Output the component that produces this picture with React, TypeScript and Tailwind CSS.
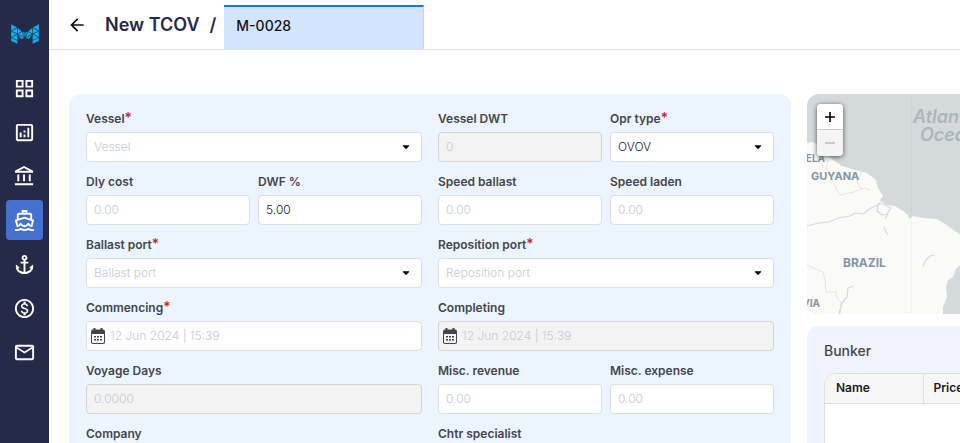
import React, { useId } from 'react';
import {
    MdAnchor,
    MdArrowBack,
    MdMailOutline,
    MdOutlineAccountBalance,
    MdOutlineAnalytics,
    MdOutlineDirectionsBoat,
    MdOutlineGridView,
    MdOutlineMonetizationOn,
} from 'react-icons/md';

const NAV_ITEMS = [
    { label: 'Dashboard', Icon: MdOutlineGridView },
    { label: 'Analytics', Icon: MdOutlineAnalytics },
    { label: 'Accounts', Icon: MdOutlineAccountBalance },
    { label: 'Voyages', Icon: MdOutlineDirectionsBoat, active: true },
    { label: 'Ports', Icon: MdAnchor },
    { label: 'Finance', Icon: MdOutlineMonetizationOn },
    { label: 'Messages', Icon: MdMailOutline },
];

const Logo = () => (
    <svg viewBox="0 0 28 20" className="h-5 w-7" fill="#12b0ec" stroke="#252a4b" strokeWidth="0.4" strokeLinejoin="round">
        {/* left leg */}
        <path d="M0 0L6.500 3.500 0 7zM6.500 3.500V10L0 7zM0 7L6.500 10 0 13.500zM6.500 10v6.500L0 13.500zM0 13.500L6.500 16.500V20L0 17z" />
        {/* right leg */}
        <path d="M28 0L21.500 3.500 28 7zM21.500 3.500V10L28 7zM28 7L21.500 10 28 13.500zM21.500 10v6.500L28 13.500zM28 13.500L21.500 16.500V20L28 17z" />
        {/* middle */}
        <path d="M6.500 3.500L11 7.500 6.500 10zM11 7.500L14 14 6.500 10zM11 7.500L14 8.500V14zM21.500 3.500L17 7.500l4.500 2.500zM17 7.500L14 14l7.500-4zM17 7.500L14 8.500V14zM6.500 10L14 14l-4 1zM21.500 10L14 14l4 1z" />
    </svg>
);

const CalendarIcon = () => (
    <svg viewBox="0 0 14 16" className="h-4 w-3.5">
        <path fill="#45434d" fillRule="evenodd" d="M2.500 0h2v1.500h5V0h2v1.500H12a2 2 0 0 1 2 2V14a2 2 0 0 1-2 2H2a2 2 0 0 1-2-2V3.500a2 2 0 0 1 2-2h.5zM1 6v8a1 1 0 0 0 1 1h10a1 1 0 0 0 1-1V6z" />
        <path fill="#45434d" d="M3 8h2v1.500H3zM6 8h2v1.500H6zM9 8h2v1.500H9zM3 11h2v1.500H3zM6 11h2v1.500H6zM9 11h2v1.500H9z" />
    </svg>
);

type FieldProps = {
    label: string;
    required?: boolean;
    placeholder?: string;
    value?: string;
    disabled?: boolean;
    kind?: 'text' | 'select' | 'date';
}

const Field: React.FC<FieldProps> = ({ label, required, placeholder, value, disabled, kind = 'text' }) => {
    const id = useId();
    const box = 'h-[30px] w-full rounded border pb-px text-xs font-light outline-none placeholder:text-[#c9c9d0]';
    const tone = disabled ? 'border-[#d3d3d3] bg-[#f3f3f3] text-[#c9c9d0]' : 'border-[#dedede] bg-white text-[#222]';

    return (
        <div className="min-w-0">
            <label htmlFor={id} className="mb-[5px] block text-xs leading-4 font-semibold text-[#45464a]">
                {label}
                {required && <span className="text-sm leading-none font-medium text-[#c0271c]">*</span>}
            </label>
            <div className="relative">
                {kind === 'select' ? (
                    <select id={id} defaultValue={value ?? ''} className={`${box} ${tone} appearance-none pr-8 pl-[7px] ${value ? '' : 'text-[#c9c9d0]!'}`}>
                        <option value={value ?? ''}>{value ?? placeholder}</option>
                    </select>
                ) : (
                    <input
                        id={id}
                        type="text"
                        placeholder={placeholder}
                        defaultValue={value}
                        disabled={disabled}
                        className={`${box} ${tone} pr-2 ${kind === 'date' ? 'pl-[23px]' : 'pl-[7px]'}`}
                    />
                )}
                {kind === 'select' && (
                    <svg viewBox="0 0 8 5" className="pointer-events-none absolute top-[13px] right-3 h-[5px] w-2">
                        <path d="M1.200.3h5.600a.4.400 0 0 1 .3.7L4.500 3.800a.7.7 0 0 1-1 0L.9 1a.4.400 0 0 1 .3-.7z" fill="#000" />
                    </svg>
                )}
                {kind === 'date' && (
                    <span className="pointer-events-none absolute inset-y-0 left-[5px] flex items-center">
                        <CalendarIcon />
                    </span>
                )}
            </div>
        </div>
    );
};

const Pair: React.FC<{ children: React.ReactNode }> = ({ children }) => (
    <div className="grid grid-cols-2 gap-2">{children}</div>
);

const RouteMap = () => (
    <div className="relative h-[220px] overflow-hidden rounded-l-xl bg-[#d4dadc]">
        <svg viewBox="0 0 320 220" className="h-[220px] w-80 max-w-none" fontFamily="Inter, sans-serif">
            <path
                fill="#fafaf8"
                d="M0 49l6-1 6 4 6 7 8 7 9 6 13 4 12 3 9 7 2 8 5 8-3 4 6 5 9 1 8 5 5 4 1 4 4-3 10 2 14 1 8 5 10 7 12 8 2 12-7 12-6 6-3 8-5 3-2 7 1 10-4 10v8H0z"
            />
            <g fill="none" stroke="#f0dfe0" strokeWidth="1">
                <path d="M21 66l-2 8 4 6 3 8 4 9 3 4 14-3 10-4 6 2M55 77l-5 11 5 8M0 171l8 4 8 3 2 8 1 12h10l1 6 4 4-1 12" />
            </g>
            <g fill="none" stroke="#d4dadc" strokeWidth="1.200" strokeLinejoin="round">
                <path d="M0 132l12-3 10-1 9-4 12-2 5-3 8 1 8-6 7-3 4-5M71 110l-1 7 5 4 5-1 4-6-8-4zM78 125l3-5M77 133l2 5 2 3M116 172l3-6 4-4 5-1M47 192l-6 2-1 9-5 6-3 11" />
            </g>
            <path d="M104.500 0v220" stroke="#000" strokeOpacity="0.03" />
            <g fill="#8496a5" fontSize="10" fontWeight="700">
                <text x="18" y="68" textAnchor="end">VENEZUELA</text>
                <text x="4" y="86" fontSize="11">GUYANA</text>
                <text x="36" y="173" fontSize="12">BRAZIL</text>
                <text x="13" y="213" textAnchor="end">BOLIVIA</text>
            </g>
            <g fill="#aab6bd" fontSize="18" fontWeight="600" fontStyle="italic">
                <text x="106" y="29">Atlantic</text>
                <text x="113" y="47">Ocean</text>
            </g>
        </svg>
        <div className="absolute top-2.5 left-2.5 flex w-[26px] flex-col overflow-hidden rounded shadow-[0_1px_5px_rgba(0,0,0,0.65)]">
            <button type="button" aria-label="Zoom in" className="flex h-[26px] items-center justify-center border-b border-[#ccc] bg-white">
                <svg viewBox="0 0 10 10" className="size-2.5" stroke="#000" strokeWidth="1.600"><path d="M0 5h10M5 0v10" /></svg>
            </button>
            <button type="button" aria-label="Zoom out" className="flex h-[26px] items-center justify-center bg-[#f4f4f4]">
                <svg viewBox="0 0 10 10" className="size-2.5" stroke="#bbb" strokeWidth="1.600"><path d="M0 5h10" /></svg>
            </button>
        </div>
    </div>
);

const App = () => (
    <div className="flex h-screen overflow-hidden bg-white font-['Inter',sans-serif]">
        <nav className="flex w-[49px] shrink-0 flex-col items-center bg-[#252a4b]">
            <div className="flex h-[68px] items-center">
                <Logo />
            </div>
            <div className="flex flex-col gap-1">
                {NAV_ITEMS.map(({ label, Icon, active }) => (
                    <button
                        key={label}
                        type="button"
                        aria-label={label}
                        className={`flex h-10 w-[37px] items-center justify-center rounded text-white ${active ? 'bg-[#4470cf]' : ''}`}
                    >
                        <Icon size={23} />
                    </button>
                ))}
            </div>
        </nav>

        <div className="flex min-w-0 flex-1 flex-col">
            <header className="flex h-[50px] shrink-0 items-center border-b border-[#dfdfdf] pl-[18px]">
                <button type="button" aria-label="Back" className="mr-[18px] text-[#111]">
                    <MdArrowBack size={20} />
                </button>
                <h1 className="flex gap-2.5 text-lg font-semibold text-[#252a4b]">
                    <span>New TCOV</span>
                    <span>/</span>
                </h1>
                <input
                    type="text"
                    aria-label="Estimate number"
                    defaultValue="M-0028"
                    className="ml-2 h-11 w-[200px] self-end border-t-2 border-r border-t-[#1274e7] border-r-[#c3d3ec] bg-[#d3e4fe] px-3 pb-1.5 text-sm font-medium text-[#111] outline-none"
                />
            </header>

            <main className="grid min-h-0 flex-1 grid-cols-[minmax(0,1fr)_153px] items-start gap-4 overflow-hidden pt-11 pl-5">
                <form className="grid grid-cols-2 gap-x-4 gap-y-3 rounded-xl bg-[#ecf4ff] p-[17px]">
                    <Field label="Vessel" required kind="select" placeholder="Vessel" />
                    <Pair>
                        <Field label="Vessel DWT" placeholder="0" disabled />
                        <Field label="Opr type" required kind="select" value="OVOV" />
                    </Pair>
                    <Pair>
                        <Field label="Dly cost" placeholder="0.00" />
                        <Field label="DWF %" value="5.00" />
                    </Pair>
                    <Pair>
                        <Field label="Speed ballast" placeholder="0.00" />
                        <Field label="Speed laden" placeholder="0.00" />
                    </Pair>
                    <Field label="Ballast port" required kind="select" placeholder="Ballast port" />
                    <Field label="Reposition port" required kind="select" placeholder="Reposition port" />
                    <Field label="Commencing" required kind="date" placeholder="12 Jun 2024 | 15:39" />
                    <Field label="Completing" kind="date" placeholder="12 Jun 2024 | 15:39" disabled />
                    <Field label="Voyage Days" placeholder="0.0000" disabled />
                    <Pair>
                        <Field label="Misc. revenue" placeholder="0.00" />
                        <Field label="Misc. expense" placeholder="0.00" />
                    </Pair>
                    <Field label="Company" kind="select" placeholder="Company" />
                    <Field label="Chtr specialist" kind="select" placeholder="Chtr specialist" />
                </form>

                <aside className="flex min-w-0 flex-col gap-3">
                    <RouteMap />
                    <section className="overflow-hidden rounded-l-xl bg-[#f1f4fe] py-4 pl-[17px]">
                        <h2 className="mb-[13px] text-sm leading-[18px] font-medium text-[#45464a]">Bunker</h2>
                        <div className="h-40 w-[400px] overflow-hidden rounded-xl border border-[#dedede] bg-white">
                            <table className="w-full text-left text-xs">
                                <thead>
                                    <tr className="h-[29px] border-b border-[#dedede] bg-[#f6f6f6] text-[#1c1c1c]">
                                        <th className="w-[98px] border-r border-[#dedede] px-[11px] font-semibold">Name</th>
                                        <th className="px-2.5 font-semibold">Price</th>
                                    </tr>
                                </thead>
                            </table>
                        </div>
                    </section>
                </aside>
            </main>
        </div>
    </div>
);

export default App;
